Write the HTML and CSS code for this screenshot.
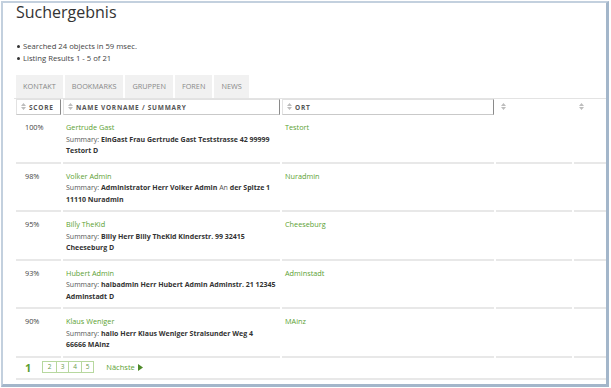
FILE: index.html
```html
<!DOCTYPE html>
<html lang="de">
<head>
<meta charset="utf-8">
<title>Suchergebnis</title>
<link rel="stylesheet" href="styles.css">
</head>
<body>
<div class="frame">
  <h1 class="title">Suchergebnis</h1>
  <ul class="stats">
    <li>Searched 24 objects in 59 msec.</li>
    <li>Listing Results 1 - 5 of 21</li>
  </ul>
  <nav class="tabs">
    <span class="tab">Kontakt</span>
    <span class="tab">Bookmarks</span>
    <span class="tab">Gruppen</span>
    <span class="tab">Foren</span>
    <span class="tab">News</span>
  </nav>
  <table class="results">
    <colgroup>
      <col class="c-score"><col class="c-name"><col class="c-ort"><col class="c-x1"><col class="c-x2">
    </colgroup>
    <thead>
      <tr>
        <th><span class="sort"><svg width="5" height="7" viewBox="0 0 5 7"><path d="M2.5 0L5 3H0Z M0 4H5L2.5 7Z"/></svg></span>Score</th>
        <th><span class="sort"><svg width="5" height="7" viewBox="0 0 5 7"><path d="M2.5 0L5 3H0Z M0 4H5L2.5 7Z"/></svg></span>Name Vorname / Summary</th>
        <th><span class="sort"><svg width="5" height="7" viewBox="0 0 5 7"><path d="M2.5 0L5 3H0Z M0 4H5L2.5 7Z"/></svg></span>Ort</th>
        <th class="plain"><span class="sort"><svg width="5" height="7" viewBox="0 0 5 7"><path d="M2.5 0L5 3H0Z M0 4H5L2.5 7Z"/></svg></span></th>
        <th class="plain"><span class="sort"><svg width="5" height="7" viewBox="0 0 5 7"><path d="M2.5 0L5 3H0Z M0 4H5L2.5 7Z"/></svg></span></th>
      </tr>
    </thead>
    <tbody>
      <tr>
        <td class="score">100%</td>
        <td><a class="link">Gertrude Gast</a><br>Summary: <b>EinGast Frau Gertrude Gast Teststrasse 42 99999<br>Testort D</b></td>
        <td><a class="link">Testort</a></td>
        <td></td><td></td>
      </tr>
      <tr>
        <td class="score">98%</td>
        <td><a class="link">Volker Admin</a><br>Summary: <b>Administrator Herr Volker Admin</b> An <b>der Spitze 1<br>11110 Nuradmin</b></td>
        <td><a class="link">Nuradmin</a></td>
        <td></td><td></td>
      </tr>
      <tr>
        <td class="score">95%</td>
        <td><a class="link">Billy TheKid</a><br>Summary: <b>Billy Herr Billy TheKid Kinderstr. 99 32415<br>Cheeseburg D</b></td>
        <td><a class="link">Cheeseburg</a></td>
        <td></td><td></td>
      </tr>
      <tr>
        <td class="score">93%</td>
        <td><a class="link">Hubert Admin</a><br>Summary: <b>halbadmin Herr Hubert Admin Adminstr. 21 12345<br>Adminstadt D</b></td>
        <td><a class="link">Adminstadt</a></td>
        <td></td><td></td>
      </tr>
      <tr>
        <td class="score">90%</td>
        <td><a class="link">Klaus Weniger</a><br>Summary: <b>hallo Herr Klaus Weniger Stralsunder Weg 4<br>66666 MAinz</b></td>
        <td><a class="link">MAinz</a></td>
        <td></td><td></td>
      </tr>
    </tbody>
  </table>
  <div class="pager">
    <span class="current">1</span>
    <span class="pages"><a class="page">2</a><a class="page">3</a><a class="page">4</a><a class="page">5</a></span>
    <a class="next">Nächste <svg width="5" height="7" viewBox="0 0 5 7"><path d="M0 0L5 3.5L0 7Z"/></svg></a>
  </div>
</div>
</body>
</html>
```
FILE: styles.css
```css
* { box-sizing: border-box; }

body {
  margin: 0;
  background: #fff;
  font-family: "Open Sans", "DejaVu Sans", sans-serif;
  color: #444;
}

.frame {
  margin: 1px;
  width: 608px;
  height: 386px;
  border-style: solid;
  border-width: 2px 3px 3px 2px;
  border-color: #c3d0de #a3b6ca #a3b6ca #c3d0de;
  padding-left: 13px;
  overflow: hidden;
}

.title {
  margin: 0;
  font-size: 16px;
  font-weight: 400;
  line-height: 18px;
  color: #333;
}

.stats {
  list-style: none;
  margin: 19px 0 0;
  padding: 0;
  font-size: 7.7px;
  line-height: 12px;
  color: #444;
}

.stats li {
  display: flex;
  align-items: center;
  gap: 3px;
}

.stats li::before {
  content: "";
  width: 3px;
  height: 3px;
  margin-left: 1px;
  border-radius: 50%;
  background: #333;
}

.tabs {
  display: flex;
  gap: 2px;
  margin-top: 11px;
}

.tab {
  background: #f1f1f1;
  height: 23px;
  padding: 0 7px;
  font-size: 7.3px;
  line-height: 23px;
  color: #888;
  text-transform: uppercase;
}

.results {
  border-collapse: separate;
  border-spacing: 2px 0;
  margin-left: -2px;
  border-top: 1px solid #e3e3e3;
  table-layout: fixed;
  width: 622px;
}

.c-score { width: 45px; }
.c-name { width: 217px; }
.c-ort { width: 212px; }
.c-x1 { width: 76px; }
.c-x2 { width: 60px; }

.results th {
  height: 16px;
  padding: 0 4px;
  text-align: left;
  font-size: 6.5px;
  font-weight: 700;
  letter-spacing: 0.75px;
  text-transform: uppercase;
  color: #555;
  white-space: nowrap;
  border: 1px solid #e2e2e2;
  border-right-color: #8a8a8a;
  border-bottom-color: #c9c9c9;
}

.results th.plain {
  border-color: transparent;
}

.sort {
  display: inline-block;
  vertical-align: middle;
  margin-right: 3px;
  line-height: 0;
  position: relative;
  top: -1px;
}

.sort svg { fill: #bdbdbd; }

.results td {
  vertical-align: top;
  padding: 7px 5px 5px 3px;
  border-bottom: 2px solid #e8e8e8;
  font-size: 7px;
  line-height: 11.5px;
  color: #555;
  white-space: nowrap;
}

.results td.score {
  padding-left: 9px;
  font-size: 7.3px;
  color: #444;
}

.results td b {
  color: #333;
  font-weight: 700;
}

.link {
  color: #5c9f33;
  font-size: 7.3px;
}

.pager {
  display: flex;
  align-items: center;
  height: 22px;
  padding: 0 0 1px 9px;
  border-bottom: 2px solid #e8e8e8;
}

.current {
  font-size: 11px;
  font-weight: 700;
  color: #5c9f33;
  line-height: 1;
}

.pages {
  display: flex;
  margin-left: 11px;
  border: 1px solid #b7d89f;
}

.page {
  width: 12.5px;
  height: 10px;
  font-size: 6.5px;
  line-height: 10px;
  text-align: center;
  color: #6a9a4c;
  border-left: 1px solid #b7d89f;
}

.page:first-child { border-left: 0; }

.next {
  margin-left: 12px;
  font-size: 7.5px;
  color: #5c9f33;
  display: flex;
  align-items: center;
  gap: 3px;
}

.next svg { fill: #4e8a2a; }
```
